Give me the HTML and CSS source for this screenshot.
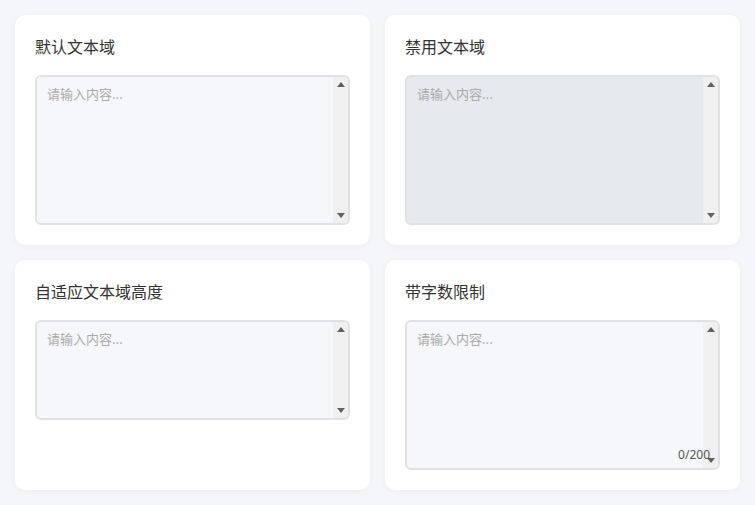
FILE: index.html
```html
<!DOCTYPE html>
<html lang="zh">
<head>
<meta charset="utf-8">
<link rel="stylesheet" href="styles.css">
</head>
<body>
<div class="grid">
  <div class="card">
    <div class="title">默认文本域</div>
    <div class="ta-wrap">
      <textarea class="ta" placeholder="请输入内容..."></textarea>
      <div class="sbar"><svg class="arr" viewBox="0 0 8 5"><path d="M0 5L4 0L8 5Z"/></svg><svg class="arr" viewBox="0 0 8 5"><path d="M0 0L8 0L4 5Z"/></svg></div>
    </div>
  </div>
  <div class="card">
    <div class="title">禁用文本域</div>
    <div class="ta-wrap">
      <textarea class="ta" placeholder="请输入内容..." disabled></textarea>
      <div class="sbar"><svg class="arr" viewBox="0 0 8 5"><path d="M0 5L4 0L8 5Z"/></svg><svg class="arr" viewBox="0 0 8 5"><path d="M0 0L8 0L4 5Z"/></svg></div>
    </div>
  </div>
  <div class="card">
    <div class="title">自适应文本域高度</div>
    <div class="ta-wrap">
      <textarea class="ta ta-auto" placeholder="请输入内容..."></textarea>
      <div class="sbar"><svg class="arr" viewBox="0 0 8 5"><path d="M0 5L4 0L8 5Z"/></svg><svg class="arr" viewBox="0 0 8 5"><path d="M0 0L8 0L4 5Z"/></svg></div>
    </div>
  </div>
  <div class="card">
    <div class="title">带字数限制</div>
    <div class="ta-wrap">
      <textarea class="ta" placeholder="请输入内容..." maxlength="200"></textarea>
      <div class="sbar"><svg class="arr" viewBox="0 0 8 5"><path d="M0 5L4 0L8 5Z"/></svg><svg class="arr" viewBox="0 0 8 5"><path d="M0 0L8 0L4 5Z"/></svg></div>
      <span class="count">0/200</span>
    </div>
  </div>
</div>
</body>
</html>
```
FILE: styles.css
```css
html, body {
  margin: 0;
  padding: 0;
  background: #f5f6fa;
  font-family: "Noto Sans CJK SC", "Noto Sans", sans-serif;
}
.grid {
  display: grid;
  grid-template-columns: 355px 355px;
  grid-auto-rows: 230px;
  gap: 15px;
  padding: 15px;
}
.card {
  background: #fff;
  border-radius: 10px;
  box-shadow: 0 1px 6px rgba(0, 0, 0, 0.04);
  padding: 20px;
  box-sizing: border-box;
}
.title {
  font-size: 16px;
  line-height: 22px;
  color: #333;
  margin-bottom: 18px;
}
.ta-wrap {
  position: relative;
  width: 315px;
}
.ta {
  display: block;
  width: 315px;
  height: 150px;
  box-sizing: border-box;
  border: 2px solid #e0e1e4;
  border-radius: 6px;
  background: #f6f7fb;
  padding: 7px 25px 7px 10px;
  font-family: "Noto Sans CJK SC", "Noto Sans", sans-serif;
  font-size: 13px;
  line-height: 1.5;
  color: #333;
  resize: none;
  overflow: hidden;
  outline: none;
  margin: 0;
}
.ta::placeholder {
  color: #aaa;
}
.ta:disabled {
  background: #e6e9ed;
}
.ta-auto {
  height: 100px;
}
.sbar {
  position: absolute;
  top: 2px;
  bottom: 2px;
  right: 2px;
  width: 15px;
  background: #f0f0f0;
  border-radius: 0 4px 4px 0;
  display: flex;
  flex-direction: column;
  justify-content: space-between;
  align-items: center;
  padding: 5px 0;
  box-sizing: border-box;
  pointer-events: none;
}
.arr {
  width: 8px;
  height: 5px;
  display: block;
  fill: #606060;
}
.count {
  position: absolute;
  right: 10px;
  bottom: 7px;
  font-size: 12px;
  color: #555;
  font-family: "Noto Sans", sans-serif;
}
```
